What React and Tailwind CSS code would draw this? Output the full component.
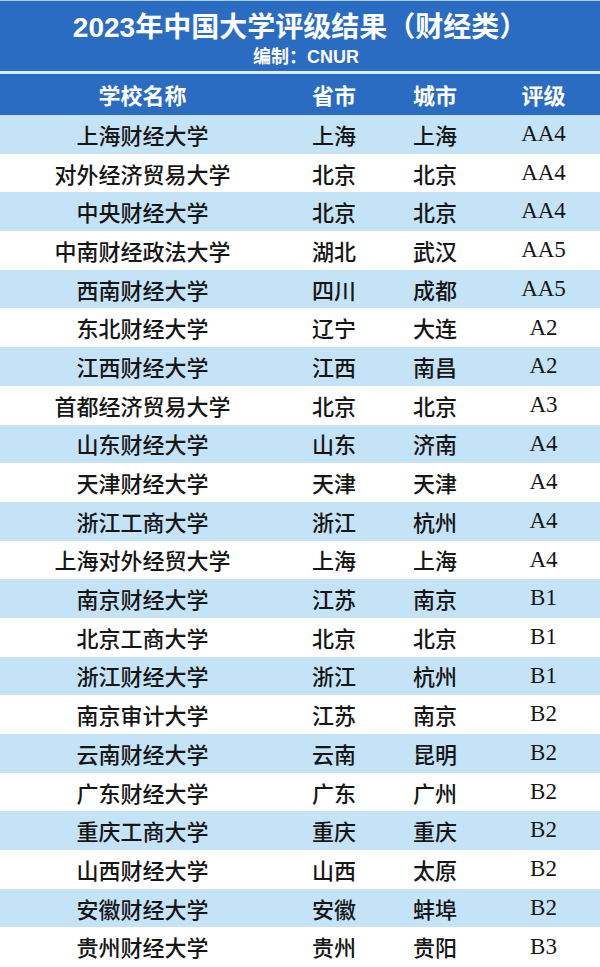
import React from "react";

const rows = [
  ["上海财经大学", "上海", "上海", "AA4"],
  ["对外经济贸易大学", "北京", "北京", "AA4"],
  ["中央财经大学", "北京", "北京", "AA4"],
  ["中南财经政法大学", "湖北", "武汉", "AA5"],
  ["西南财经大学", "四川", "成都", "AA5"],
  ["东北财经大学", "辽宁", "大连", "A2"],
  ["江西财经大学", "江西", "南昌", "A2"],
  ["首都经济贸易大学", "北京", "北京", "A3"],
  ["山东财经大学", "山东", "济南", "A4"],
  ["天津财经大学", "天津", "天津", "A4"],
  ["浙江工商大学", "浙江", "杭州", "A4"],
  ["上海对外经贸大学", "上海", "上海", "A4"],
  ["南京财经大学", "江苏", "南京", "B1"],
  ["北京工商大学", "北京", "北京", "B1"],
  ["浙江财经大学", "浙江", "杭州", "B1"],
  ["南京审计大学", "江苏", "南京", "B2"],
  ["云南财经大学", "云南", "昆明", "B2"],
  ["广东财经大学", "广东", "广州", "B2"],
  ["重庆工商大学", "重庆", "重庆", "B2"],
  ["山西财经大学", "山西", "太原", "B2"],
  ["安徽财经大学", "安徽", "蚌埠", "B2"],
  ["贵州财经大学", "贵州", "贵阳", "B3"],
];

const cjk = "font-['Noto_Sans_CJK_SC',sans-serif]";

function App() {
  return (
    <div className="w-[600px] h-[967px] overflow-hidden bg-white">
      {/* title block */}
      <div className="border-t border-[#a9cdec] bg-[#2b6cc3] h-[71px] flex flex-col items-center pt-[9px]">
        <h1
          className="text-white text-[28px] leading-[36px] font-bold font-['Liberation_Sans','Noto_Sans_CJK_SC',sans-serif]"
        >
          2023年中国大学评级结果（财经类）
        </h1>
        <div className={`text-white text-[18px] leading-[22px] font-bold ${cjk} -mt-[2px] pl-[12px]`}>
          编制：<span className="font-['Liberation_Sans',sans-serif]">CNUR</span>
        </div>
      </div>
      <div className="h-[3px] bg-[#dcecf8]" />
      {/* column header */}
      <div
        className={`grid grid-cols-[285px_98px_104px_113px] h-[41px] items-center bg-[#2b6cc3] text-white text-[22px] font-bold ${cjk}`}
      >
        <div className="text-center">学校名称</div>
        <div className="text-center">省市</div>
        <div className="text-center">城市</div>
        <div className="text-center">评级</div>
      </div>
      {rows.map((r, i) => (
        <div
          key={i}
          className={`grid grid-cols-[285px_98px_104px_113px] h-[38.7px] items-center text-[#161616] ${
            i % 2 === 0 ? "bg-[#c4e3f6]" : "bg-white"
          }`}
        >
          <div className={`text-center text-[22px] font-medium ${cjk}`}>{r[0]}</div>
          <div className={`text-center text-[22px] font-medium ${cjk}`}>{r[1]}</div>
          <div className={`text-center text-[22px] font-medium ${cjk}`}>{r[2]}</div>
          <div className="text-center text-[23px] font-['Liberation_Serif',serif]">{r[3]}</div>
        </div>
      ))}
    </div>
  );
}

export default App;
